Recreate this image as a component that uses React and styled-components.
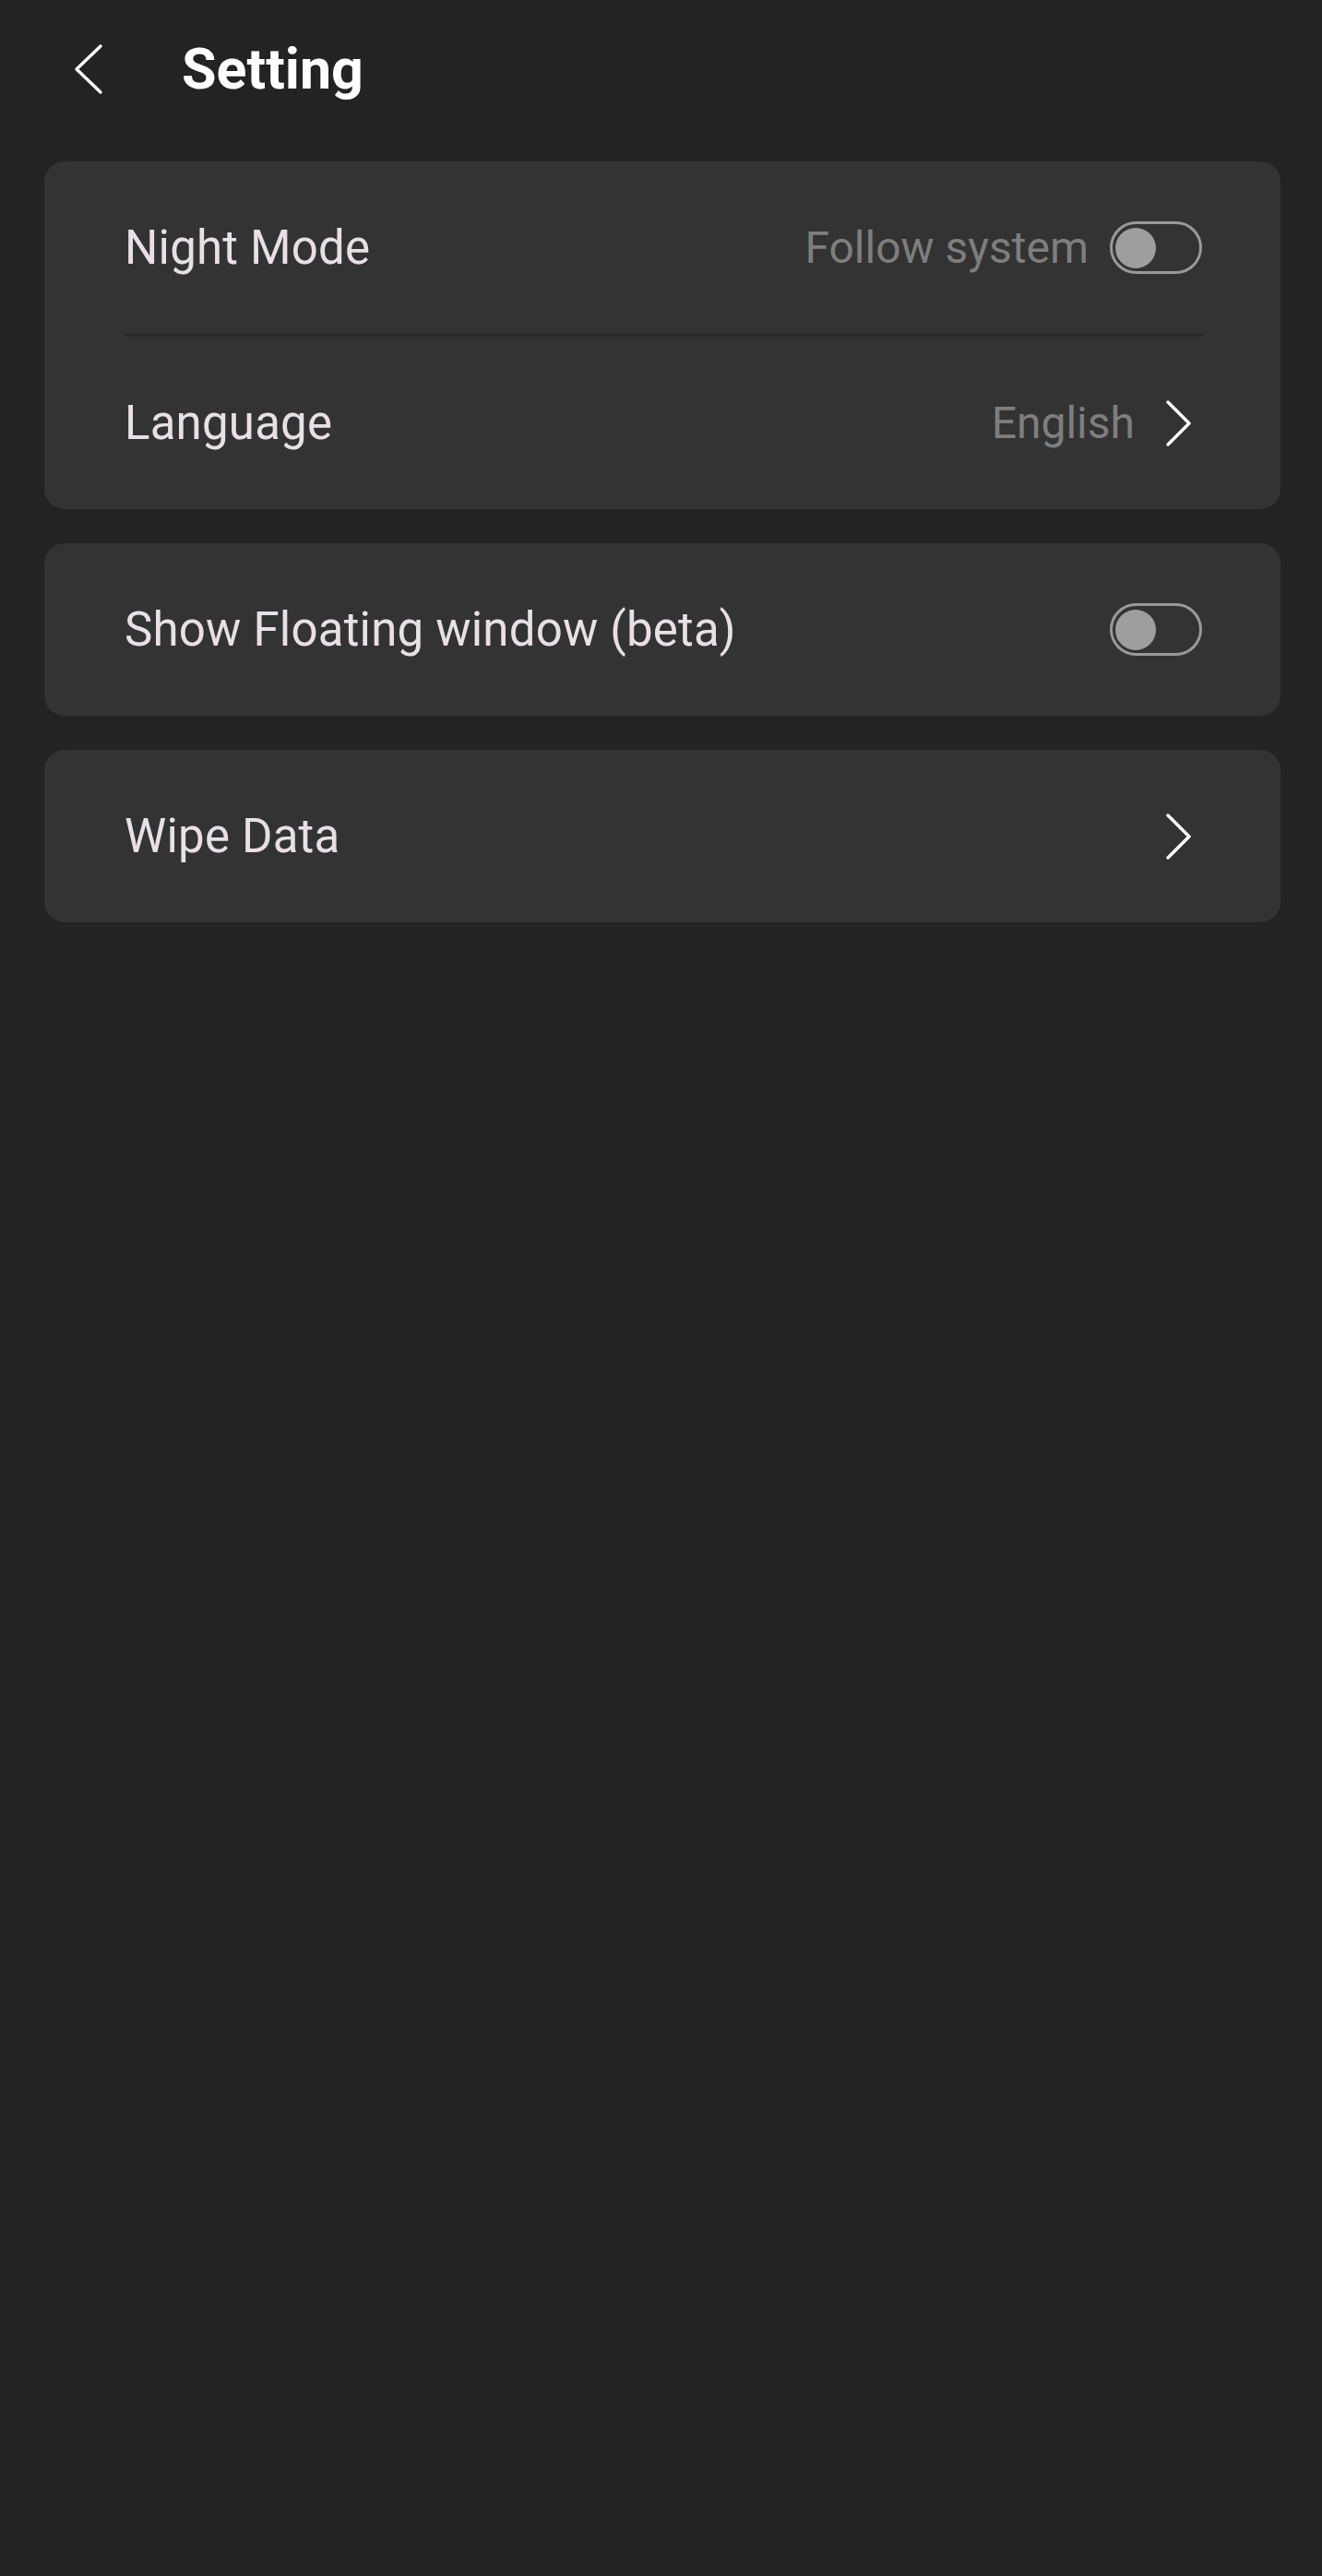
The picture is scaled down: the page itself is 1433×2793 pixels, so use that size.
import styled, { createGlobalStyle } from 'styled-components'

const Global = createGlobalStyle`
  html, body {
    margin: 0;
    padding: 0;
    background: #232323;
  }
  body {
    font-family: Roboto, "Noto Sans", sans-serif;
    -webkit-font-smoothing: antialiased;
  }
`

const Page = styled.div`
  min-height: 2793px;
  padding: 0 45px 0 48px;
  box-sizing: border-box;
  background: #232323;
`

const Header = styled.div`
  height: 150px;
  display: flex;
  align-items: center;
  padding-left: 32px;
  margin-bottom: 25px;
`

const Title = styled.div`
  margin-left: 85px;
  font-size: 61px;
  font-weight: 700;
  color: #ffffff;
  line-height: 1;
`

const Cards = styled.div`
  display: flex;
  flex-direction: column;
  gap: 37px;
`

const Card = styled.div`
  background: #333333;
  border-radius: 22px;
  overflow: hidden;
`

const Row = styled.div`
  height: 187px;
  display: flex;
  align-items: center;
  justify-content: space-between;
  padding: 0 85px 0 87px;
`

const Divider = styled.div`
  height: 3px;
  margin: 0 85px 0 87px;
  background: #282828;
`

const Label = styled.div`
  font-size: 51px;
  letter-spacing: 0.2px;
  color: #e7e1e6;
  line-height: 1;
`

const Trail = styled.div`
  display: flex;
  align-items: center;
  gap: ${(p) => p.$gap || 23}px;
`

const Value = styled.div`
  font-size: 48px;
  color: #7e7e7e;
  line-height: 1;
`

const Track = styled.div`
  width: 100px;
  height: 57px;
  box-sizing: border-box;
  border: 3px solid #999999;
  border-radius: 29px;
  display: flex;
  align-items: center;
  padding: 0 3px;
`

const Knob = styled.div`
  width: 44px;
  height: 44px;
  border-radius: 50%;
  background: #9e9e9e;
`

const Toggle = () => (
  <Track>
    <Knob />
  </Track>
)

const Back = () => (
  <svg width="32" height="56" viewBox="0 0 32 56">
    <polyline points="29,3 3,28 29,53" fill="none" stroke="#ffffff" strokeWidth="3.4" strokeLinecap="round" strokeLinejoin="round" />
  </svg>
)

const Chevron = () => (
  <svg width="40" height="52" viewBox="0 0 40 52">
    <polyline points="3,3 26,26 3,49" fill="none" stroke="#ffffff" strokeWidth="3.4" strokeLinecap="round" strokeLinejoin="round" />
  </svg>
)

export default () => (
  <Page>
    <Global />
    <Header>
      <Back />
      <Title>Setting</Title>
    </Header>
    <Cards>
      <Card>
        <Row>
          <Label>Night Mode</Label>
          <Trail>
            <Value>Follow system</Value>
            <Toggle />
          </Trail>
        </Row>
        <Divider />
        <Row>
          <Label>Language</Label>
          <Trail $gap={33}>
            <Value>English</Value>
            <Chevron />
          </Trail>
        </Row>
      </Card>
      <Card>
        <Row>
          <Label>Show Floating window (beta)</Label>
          <Toggle />
        </Row>
      </Card>
      <Card>
        <Row>
          <Label>Wipe Data</Label>
          <Chevron />
        </Row>
      </Card>
    </Cards>
  </Page>
)
